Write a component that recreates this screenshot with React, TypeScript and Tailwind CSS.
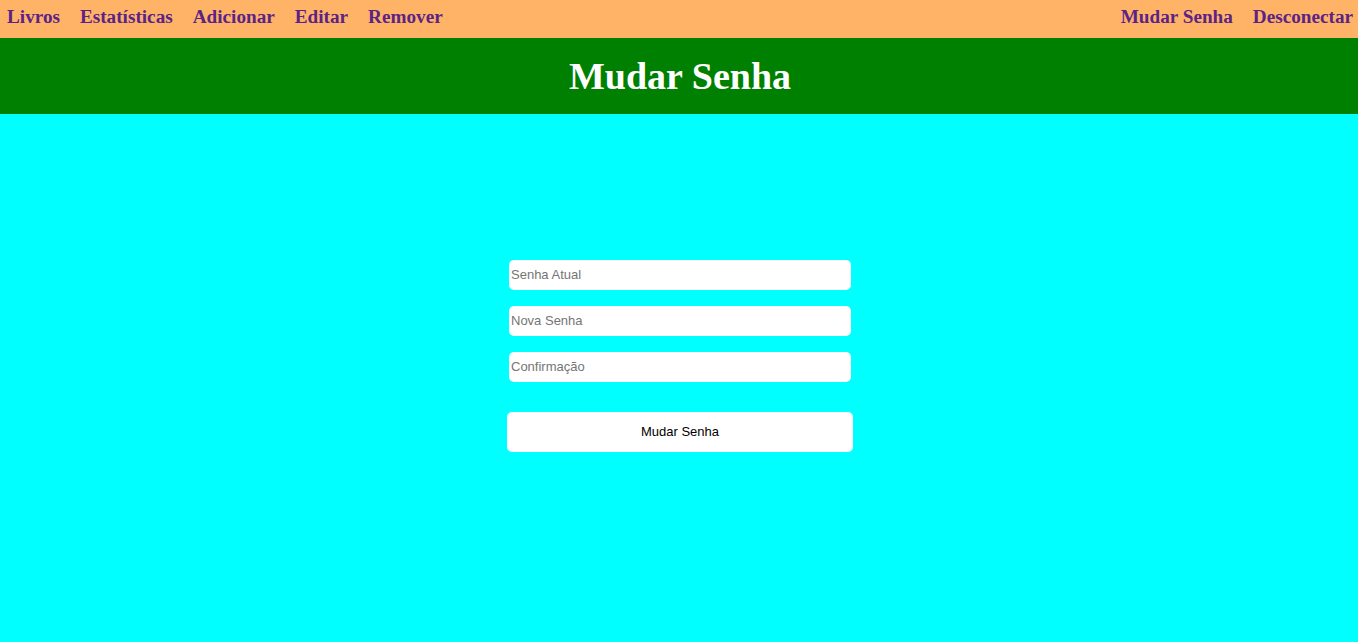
import React from 'react';

const links = ['Livros', 'Estatísticas', 'Adicionar', 'Editar', 'Remover'];

const App: React.FC = () => {
  return (
    <div className="min-h-screen bg-[#00ffff] font-['Liberation_Serif',serif]">
      {/* Nav */}
      <nav className="flex justify-between items-center h-[38px] bg-[#ffb366] pl-[7px] pr-[5px] pb-1">
        <div className="flex gap-5">
          {links.map((l) => (
            <a key={l} className="text-[19.2px] font-bold text-[#5b2386] cursor-pointer">
              {l}
            </a>
          ))}
        </div>
        <div className="flex gap-5">
          <a className="text-[19.2px] font-bold text-[#5b2386] cursor-pointer">Mudar Senha</a>
          <a className="text-[19.2px] font-bold text-[#5b2386] cursor-pointer">Desconectar</a>
        </div>
      </nav>

      {/* Title */}
      <header className="h-[76px] bg-[#008000] flex items-center justify-center pl-[2px]">
        <h1 className="text-[38px] font-bold text-white leading-none">Mudar Senha</h1>
      </header>

      {/* Form */}
      <form className="flex flex-col items-center pt-[146px] pl-[2px] font-['Liberation_Sans',sans-serif]">
        <div className="flex flex-col gap-4 w-[342px]">
          <input type="password" placeholder="Senha Atual" className="h-[30px] bg-white rounded-[5px] px-[2px] pb-[1px] text-[13px] text-black placeholder:text-[#757575] outline-none" />
          <input type="password" placeholder="Nova Senha" className="h-[30px] bg-white rounded-[5px] px-[2px] pb-[1px] text-[13px] text-black placeholder:text-[#757575] outline-none" />
          <input type="password" placeholder="Confirmação" className="h-[30px] bg-white rounded-[5px] px-[2px] pb-[1px] text-[13px] text-black placeholder:text-[#757575] outline-none" />
        </div>
        <button type="button" className="mt-[30px] w-[346px] h-[40px] bg-white rounded-[5px] text-[13px] text-black">
          Mudar Senha
        </button>
      </form>
    </div>
  );
};

export default App;
